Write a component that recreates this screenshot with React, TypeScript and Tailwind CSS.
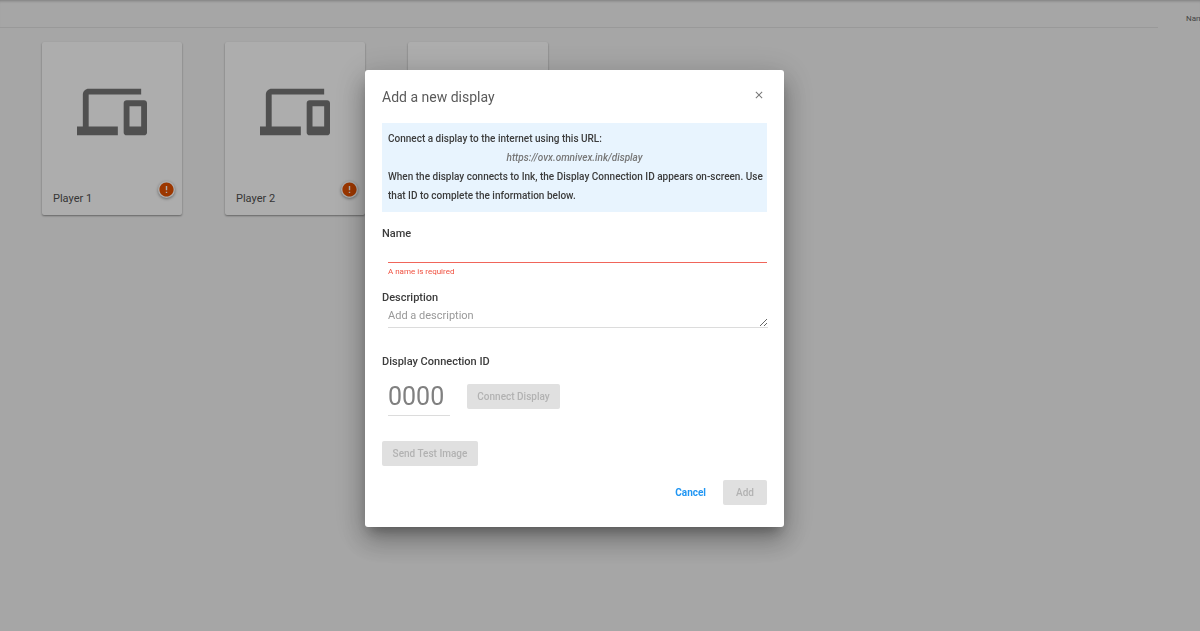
import React from 'react';
import { MdClose, MdDevices, MdError } from 'react-icons/md';

interface PlayerCardProps {
  name: string;
  hasError?: boolean;
}

const PlayerCard: React.FC<PlayerCardProps> = ({ name, hasError }) => (
  <article className="flex h-[173px] w-[140px] shrink-0 flex-col justify-between rounded-[2px] bg-white pt-[35px] shadow-[0_1px_2px_rgba(0,0,0,0.4)]">
    <MdDevices size={70} className="self-center text-[#767676]" />
    <div className="flex items-end justify-between pb-2 pl-[11px] pr-[7px]">
      <h3 className="text-[11px] leading-4 text-[#505050]">{name}</h3>
      {hasError && (
        <span className="mb-[9px] rounded-full bg-white shadow-[0_1px_3px_rgba(0,0,0,0.4)]">
          <MdError size={17} className="text-[#e65100]" />
        </span>
      )}
    </div>
  </article>
);

interface DisabledButtonProps {
  children: React.ReactNode;
  className: string;
}

const DisabledButton: React.FC<DisabledButtonProps> = ({ children, className }) => (
  <button
    type="button"
    disabled
    className={`h-[25px] rounded-[2px] bg-[#e0e0e0] text-[10px] font-medium text-[#b2b2b2] ${className}`}
  >
    {children}
  </button>
);

const AddDisplayDialog: React.FC = () => (
  <form
    role="dialog"
    aria-labelledby="dialog-title"
    className="w-[419px] rounded-[3px] bg-white px-[17px] pb-[22px] pt-[17px] text-[#3c3c3c] shadow-[0_8px_12px_-5px_rgba(0,0,0,0.3),0_14px_24px_2px_rgba(0,0,0,0.2),0_6px_32px_5px_rgba(0,0,0,0.14)]"
  >
    <div className="flex items-start justify-between">
      <h2 id="dialog-title" className="text-[14px] leading-5 text-[#5a5a5a]">
        Add a new display
      </h2>
      <button type="button" aria-label="Close" className="mr-[2px] mt-[2px] text-[#777]">
        <MdClose size={12} />
      </button>
    </div>

    <div className="mt-4 bg-[#e8f4fe] pb-[7px] pl-[6px] pt-[6px] text-[10px] font-medium leading-[19px]">
      <p>Connect a display to the internet using this URL:</p>
      <p className="pr-[6px] text-center italic text-[#777]">https://ovx.omnivex.ink/display</p>
      <p>
        When the display connects to Ink, the Display Connection ID appears on-screen. Use that ID
        to complete the information below.
      </p>
    </div>

    <div className="mt-[14px]">
      <label htmlFor="name" className="block text-[11px] font-medium leading-4">
        Name
      </label>
      <div className="ml-[6px]">
        <input
          id="name"
          type="text"
          aria-describedby="name-error"
          className="block h-[21px] w-full border-b border-[#f0655a] text-[11px] outline-none"
        />
        <p id="name-error" className="mt-[3px] text-[8px] leading-3 text-[#f0503f]">
          A name is required
        </p>
      </div>
    </div>

    <div className="mt-3">
      <label htmlFor="description" className="block text-[11px] font-medium leading-4">
        Description
      </label>
      <textarea
        id="description"
        rows={1}
        placeholder="Add a description"
        className="ml-[6px] block h-[22px] w-[380px] resize overflow-hidden border-b border-[#dcdcdc] pt-[2px] text-[11px] leading-4 outline-none placeholder:text-[#999]"
      />
    </div>

    <div className="mt-[26px]">
      <label htmlFor="connection-id" className="block text-[11px] font-medium leading-4">
        Display Connection ID
      </label>
      <div className="ml-[6px] mt-[7px] flex items-center gap-[17px]">
        <input
          id="connection-id"
          type="text"
          maxLength={4}
          placeholder="0000"
          className="h-[39px] w-[62px] border-b border-[#dcdcdc] text-[25px] outline-none placeholder:text-[#808080]"
        />
        <DisabledButton className="w-[93px]">Connect Display</DisabledButton>
      </div>
    </div>

    <DisabledButton className="mt-[25px] w-24">Send Test Image</DisabledButton>

    <div className="mt-[14px] flex items-center justify-end gap-[17px]">
      <button type="button" className="text-[10px] font-bold text-[#2196f3]">
        Cancel
      </button>
      <DisabledButton className="w-11">Add</DisabledButton>
    </div>
  </form>
);

const App: React.FC = () => (
  <div className="min-h-screen overflow-hidden bg-[#f5f5f5] font-[Roboto,sans-serif]">
    <header className="flex h-7 justify-between shadow-[inset_0_3px_3px_-2px_rgba(0,0,0,0.25)]">
      <div className="flex-1 border-b border-[#e2e2e2]" />
      <span className="w-[42px] whitespace-nowrap pl-7 pt-[13px] text-[8px] leading-3 text-[#666]">
        Name
      </span>
    </header>
    <main className="flex gap-[43px] px-[42px] pt-[14px]">
      <PlayerCard name="Player 1" hasError />
      <PlayerCard name="Player 2" hasError />
      <PlayerCard name="" />
    </main>

    {/* Backdrop */}
    <div className="fixed inset-0 flex items-start justify-center bg-black/32 pr-[51px] pt-[70px]">
      <AddDisplayDialog />
    </div>
  </div>
);

export default App;
